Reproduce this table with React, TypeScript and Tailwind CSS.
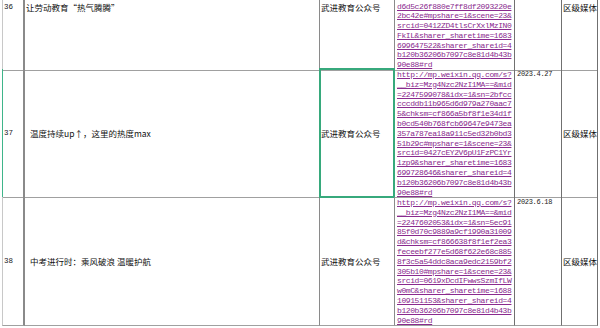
import React from 'react';

interface Row {
    no: string;
    title: string;
    titlePad: string;
    source: string;
    link: string[];
    date: string;
    media: string;
    selected?: boolean;
    partial?: boolean;
}

// row 36 is scrolled, only its bottom part is visible
const rows: Row[] = [
    {
        no: '36',
        title: '让劳动教育“热气腾腾”',
        titlePad: 'pl-[1px]',
        source: '武进教育公众号',
        link: [
            'd6d5c26f880e7ff8df2093220e',
            '2bc42e#mpshare=1&scene=23&',
            'srcid=0412ZD4tlsCrXxlMzIN0',
            'FkIL&sharer_sharetime=1683',
            '699647522&sharer_shareid=4',
            'b120b36206b7097c8e81d4b43b',
            '90e88#rd',
        ],
        date: '',
        media: '区级媒体',
        partial: true,
    },
    {
        no: '37',
        title: '温度持续up↑，这里的热度max',
        titlePad: 'pl-[5px]',
        source: '武进教育公众号',
        link: [
            'http://mp.weixin.qq.com/s?',
            '__biz=Mzg4Nzc2NzI1MA==&mid',
            '=2247599078&idx=1&sn=2bfcc',
            'cccddb11b965d6d979a270aac7',
            '5&chksm=cf866a5bf8f1e34d1f',
            'b0cd540b768fcb69647e9473ea',
            '357a787ea18a911c5ed32b0bd3',
            '51b29c#mpshare=1&scene=23&',
            'srcid=0427cEY2V6pU1FzPC1Yr',
            '1zp9&sharer_sharetime=1683',
            '699728646&sharer_shareid=4',
            'b120b36206b7097c8e81d4b43b',
            '90e88#rd',
        ],
        date: '2023.4.27',
        media: '区级媒体',
        selected: true,
    },
    {
        no: '38',
        title: '中考进行时：乘风破浪 温暖护航',
        titlePad: 'pl-[5px]',
        source: '武进教育公众号',
        link: [
            'http://mp.weixin.qq.com/s?',
            '__biz=Mzg4Nzc2NzI1MA==&mid',
            '=2247602053&idx=1&sn=5ec91',
            '85f0d70c9889a9cf1990a31009',
            'd&chksm=cf866638f8f1ef2ea3',
            'feceebf277e5d68f622e68c885',
            '8f3c5a54ddc8aca9edc2159bf2',
            '305b10#mpshare=1&scene=23&',
            'srcid=0619xDcdIFwwsSzmIfLW',
            'w0mC&sharer_sharetime=1688',
            '109151153&sharer_shareid=4',
            'b120b36206b7097c8e81d4b43b',
            '90e88#rd',
        ],
        date: '2023.6.18',
        media: '区级媒体',
    },
];

const cjk = "font-['Noto_Sans_CJK_SC',sans-serif] text-[8.5px] leading-[10px] text-[#111]";
const mono = "font-['Liberation_Mono',monospace]";

const App = () => {
    return (
        <div className='w-[600px] h-[328px] overflow-hidden bg-white'>
            <div className='pl-[2px] flex flex-col'>
                {rows.map(row => {
                    const align = row.partial ? 'items-start pt-[2px]' : 'items-center';
                    return (
                        <div key={row.no} className={`grid grid-cols-[23px_295px_75px_120px_47px_36px] ${row.partial ? 'h-[69px]' : 'h-[128px]'}`}>
                            <div className={`flex ${align} pl-[1px] border-l border-r-2 border-b border-b-[#a0a0a0] border-r-[#8a8a8a] ${row.selected ? 'border-l-[#3fb58a]' : 'border-l-[#c8c8c8]'} ${mono} text-[7.5px] leading-[10px] text-[#222]`}>
                                {row.no}
                            </div>
                            <div className={`flex ${align} ${row.titlePad} border-r border-b border-r-[#8a8a8a] border-b-[#a0a0a0] ${cjk}`}>
                                {row.title}
                            </div>
                            <div className={`relative flex ${align} pl-[1px] border-r border-b border-r-[#8a8a8a] border-b-[#a0a0a0] ${cjk}`}>
                                {row.source}
                                {row.selected && (
                                    <div className='absolute -top-px -left-px right-[-1px] bottom-[-1px] border-2 border-[#37a97c]'></div>
                                )}
                            </div>
                            <div className={`flex flex-col ${row.partial ? 'pt-[1.5px]' : 'pt-[1px]'} pl-[2px] border-r border-b border-r-[#707070] border-b-[#a0a0a0] ${mono} text-[8px] tracking-[-0.4px] leading-[9.8px] text-[#8a2a8e]`}>
                                {row.link.map((line, i) => (
                                    <span key={i} className='underline whitespace-pre'>{line}</span>
                                ))}
                            </div>
                            <div className={`pt-[1px] pl-[2px] border-r border-b border-r-[#707070] border-b-[#a0a0a0] ${mono} text-[7px] tracking-[-0.3px] leading-[9.8px] text-[#222]`}>
                                {row.date}
                            </div>
                            <div className={`flex ${align} pl-[1px] border-r border-b border-r-[#707070] border-b-[#a0a0a0] ${cjk}`}>
                                {row.media}
                            </div>
                        </div>
                    );
                })}
            </div>
        </div>
    );
};

export default App;
